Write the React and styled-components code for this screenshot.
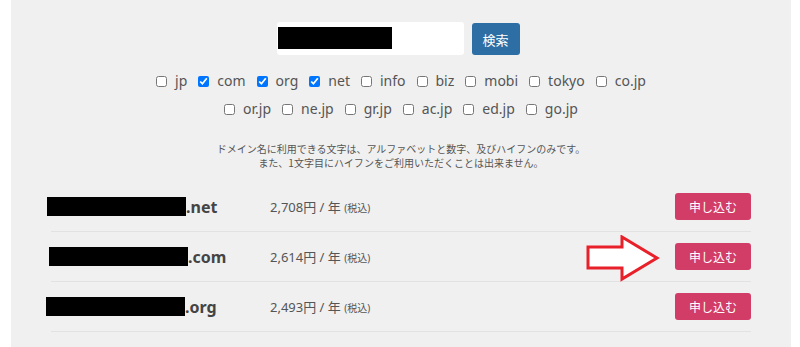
import styled, { createGlobalStyle } from "styled-components";

const GlobalStyle = createGlobalStyle`
  body {
    margin: 0;
    background: #ffffff;
    font-family: "Noto Sans", "Noto Sans CJK JP", sans-serif;
  }
`;

const tlds = [
  { name: "jp", checked: false },
  { name: "com", checked: true },
  { name: "org", checked: true },
  { name: "net", checked: true },
  { name: "info", checked: false },
  { name: "biz", checked: false },
  { name: "mobi", checked: false },
  { name: "tokyo", checked: false },
  { name: "co.jp", checked: false },
  { name: "or.jp", checked: false },
  { name: "ne.jp", checked: false },
  { name: "gr.jp", checked: false },
  { name: "ac.jp", checked: false },
  { name: "ed.jp", checked: false },
  { name: "go.jp", checked: false },
];

const results = [
  { tld: ".net", price: "2,708", shift: -4, arrow: false },
  { tld: ".com", price: "2,614", shift: -2, arrow: true },
  { tld: ".org", price: "2,493", shift: -5, arrow: false },
];

const Arrow = () => (
  <ArrowSvg width="74" height="48" viewBox="0 0 74 48">
    <polygon
      points="2,12 36,12 36,2 71,23 36,44 36,33 2,33"
      fill="#ffffff"
      stroke="#e8202a"
      strokeWidth="3"
      strokeLinejoin="miter"
    />
  </ArrowSvg>
);

const App = () => {
  return (
    <>
      <GlobalStyle />
      <Panel>
        <SearchForm>
          <SearchInput>
            <Redact width={114} height={22} />
          </SearchInput>
          <SearchButton>検索</SearchButton>
        </SearchForm>

        <TldList>
          {tlds.map((t) => (
            <TldLabel key={t.name}>
              <input type="checkbox" defaultChecked={t.checked} />
              {t.name}
            </TldLabel>
          ))}
        </TldList>

        <Notice>
          ドメイン名に利用できる文字は、アルファベットと数字、及びハイフンのみです。
          <br />
          また、1文字目にハイフンをご利用いただくことは出来ません。
        </Notice>

        <Results>
          {results.map((r) => (
            <Row key={r.tld}>
              <Domain>
                <Redact width={139} height={19} shift={r.shift} />
                {r.tld}
              </Domain>
              <Price>
                {r.price}円 / 年 <Tax>(税込)</Tax>
              </Price>
              {r.arrow && <Arrow />}
              <ApplyButton>申し込む</ApplyButton>
            </Row>
          ))}
        </Results>
      </Panel>
    </>
  );
};

export default App;

const Panel = styled.div`
  margin: 0 9px 0 11px;
  min-height: 347px;
  background: #f0f0f0;
  padding-top: 22px;
  box-sizing: border-box;
`;

const SearchForm = styled.div`
  display: flex;
  justify-content: center;
  align-items: flex-start;
  gap: 8px;
  margin-right: 6px;
`;

const SearchInput = styled.div`
  width: 187px;
  height: 33px;
  background: #ffffff;
  border-radius: 3px;
  box-sizing: border-box;
  padding: 5px 0 0 1px;
`;

const Redact = styled.span`
  display: inline-block;
  width: ${(p) => p.width}px;
  height: ${(p) => p.height}px;
  background: #000000;
  margin-left: ${(p) => p.shift || 0}px;
`;

const SearchButton = styled.button`
  width: 48px;
  height: 32px;
  margin-top: 1px;
  border: none;
  border-radius: 3px;
  background: #2d6ea5;
  color: #ffffff;
  font-family: "Noto Sans CJK JP", sans-serif;
  font-size: 13px;
  padding: 0;
`;

const TldList = styled.div`
  width: 520px;
  margin: 15px auto 0;
  display: flex;
  flex-wrap: wrap;
  justify-content: center;
  column-gap: 11px;
  row-gap: 6px;
`;

const TldLabel = styled.label`
  display: flex;
  align-items: center;
  font-size: 14px;
  line-height: 22px;
  color: #555555;

  input {
    width: 11px;
    height: 11px;
    margin: 0 8px 0 0;
  }
`;

const Notice = styled.p`
  margin: 22px 0 0;
  text-align: center;
  font-family: "Noto Sans CJK JP", sans-serif;
  font-size: 10px;
  line-height: 14px;
  color: #555555;
`;

const Results = styled.div`
  margin: 12px 40px 0;
`;

const Row = styled.div`
  position: relative;
  display: flex;
  align-items: center;
  height: 49px;
  border-bottom: 1px solid #e2e2e2;
`;

const Domain = styled.div`
  width: 219px;
  display: flex;
  align-items: center;
  font-size: 16px;
  font-weight: 700;
  color: #444444;
`;

const Price = styled.div`
  flex: 1;
  font-family: "Noto Sans", "Noto Sans CJK JP", sans-serif;
  font-size: 13px;
  color: #555555;
`;

const Tax = styled.span`
  font-size: 10px;
`;

const ArrowSvg = styled.svg`
  position: absolute;
  left: 535px;
  top: 3px;
`;

const ApplyButton = styled.button`
  width: 76px;
  height: 27px;
  border: none;
  border-radius: 3px;
  background: #d23d68;
  color: #ffffff;
  font-family: "Noto Sans CJK JP", sans-serif;
  font-size: 12px;
  padding: 0;
`;
